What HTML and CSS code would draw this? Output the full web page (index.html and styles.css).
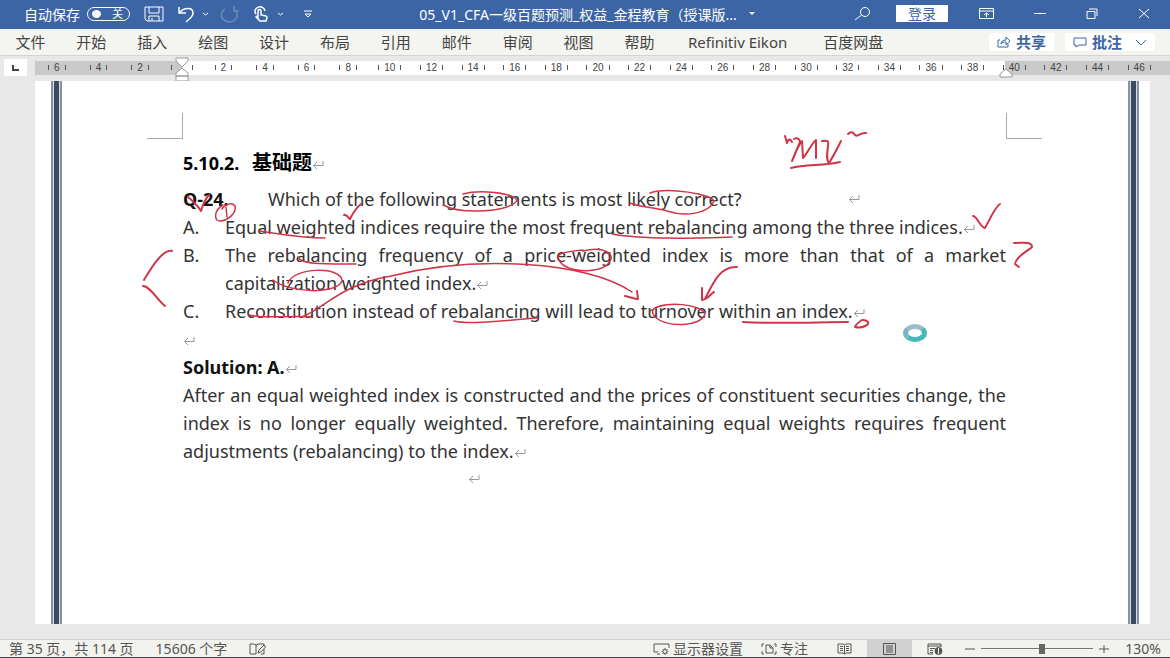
FILE: index.html
```html
<!DOCTYPE html>
<html lang="zh-CN">
<head>
	<meta charset="UTF-8">
	<meta name="viewport" content="width=device-width, initial-scale=1.0">
	<title>05_V1_CFA一级百题预测_权益_金程教育</title>
	<link rel="stylesheet" href="styles.css">
</head>
<body>

	<!-- 段落标记 -->
	<svg class="defs" width="0" height="0" aria-hidden="true">
		<symbol id="ret" viewBox="0 0 12 10">
			<path d="M11 1v4.500H1.500M5 2L1.500 5.500L5 9" />
		</symbol>
	</svg>

	<!-- 标题栏 -->
	<header class="titlebar">
		<div class="quick">
			<label class="autosave">自动保存
				<span class="switch"><input type="checkbox" role="switch"><span>关</span></span>
			</label>
			<button aria-label="保存"><svg width="20" height="16" viewBox="0 0 20 16"><path d="M1 1h18v14H3l-2-2zM5 1v6h10V1M5 15v-5h10v5M8 12v3" /></svg></button>
			<button class="undo" aria-label="撤消"><svg width="28" height="18" viewBox="0 0 28 18"><path class="bold" d="M1 2v6h7M1 8C6 2 15 2 15 8c0 4-3 5-7 9" /><path d="M25 8l2.500 2L30 8" /></svg></button>
			<button class="faded" aria-label="重复"><svg width="20" height="18" viewBox="0 0 20 18"><path class="bold" d="M14 1v5h5M15 5A8 7 0 1 1 5 4" /></svg></button>
			<button aria-label="触摸/鼠标模式"><svg width="32" height="18" viewBox="0 0 32 18"><path class="bold" d="M2 9a5 4.500 0 1 1 9-3M4 12V6c0-2 3-2 3 0v4l5 1c1 0 1 1 1 2l-1 3H6l-4-4c0-1 1-1 2 0z" /><path d="M24 8l2.500 2L29 8" /></svg></button>
			<button aria-label="自定义"><svg width="8" height="8" viewBox="0 0 8 8"><path d="M0 1h8M1 4l3 3l3-3z" /></svg></button>
		</div>
		<div class="doc-title">
			<h1>05_V1_CFA一级百题预测_权益_金程教育（授课版...</h1>
			<svg width="6" height="4" viewBox="0 0 6 4"><path class="solid" d="M0 0h6L3 3z" /></svg>
		</div>
		<div class="window-tools">
			<button aria-label="搜索"><svg width="18" height="14" viewBox="0 0 18 14"><circle cx="11" cy="5" r="4.500" /><path d="M7.500 8L1 13" /></svg></button>
			<button class="login">登录</button>
			<button aria-label="功能区显示选项"><svg width="15" height="11" viewBox="0 0 15 11"><path d="M.5.5h14v10H.5zM1 3h13M7.500 9V5M5 7l2.500-2L10 7" /></svg></button>
			<button aria-label="最小化"><svg width="12" height="11" viewBox="0 0 12 11"><path d="M0 5.500h12" /></svg></button>
			<button aria-label="还原"><svg width="12" height="11" viewBox="0 0 12 11"><path d="M1 3.500h8v7H1zM3 1h8v7" /></svg></button>
			<button aria-label="关闭"><svg width="12" height="11" viewBox="0 0 12 11"><path d="M1 1l10 9M11 1L1 10" /></svg></button>
		</div>
	</header>

	<!-- 选项卡 -->
	<nav class="ribbon">
		<div class="tabs">
			<a href="#">文件</a>
			<a href="#">开始</a>
			<a href="#">插入</a>
			<a href="#">绘图</a>
			<a href="#">设计</a>
			<a href="#">布局</a>
			<a href="#">引用</a>
			<a href="#">邮件</a>
			<a href="#">审阅</a>
			<a href="#">视图</a>
			<a href="#">帮助</a>
		</div>
		<div class="addins">
			<a href="#">Refinitiv Eikon</a>
			<a href="#">百度网盘</a>
		</div>
		<div class="actions">
			<button><svg width="14" height="12" viewBox="0 0 14 12"><path d="M3 4H1v7h10V8M4 8c0-3 2-4 5-4V1l4 4l-4 4V6C7 6 5 6 4 8z" /></svg>共享</button>
			<button><svg width="14" height="11" viewBox="0 0 14 11"><path d="M1 1h12v7H6l-3 2V8H1z" /></svg>批注<svg class="chevron" width="12" height="7" viewBox="0 0 12 7"><path d="M1 1l5 5l5-5" /></svg></button>
		</div>
	</nav>

	<!-- 标尺 -->
	<div class="ruler-row">
		<button class="tab-stop" aria-label="制表符"><svg width="7" height="6" viewBox="0 0 7 6"><path d="M1 0v5h6" /></svg></button>
		<div class="ruler">
			<div class="scale">
				<span>6</span><span>4</span><span>2</span><span></span><span>2</span><span>4</span><span>6</span><span>8</span><span>10</span><span>12</span><span>14</span><span>16</span><span>18</span><span>20</span><span>22</span><span>24</span><span>26</span><span>28</span><span>30</span><span>32</span><span>34</span><span>36</span><span>38</span><span>40</span><span>42</span><span>44</span><span>46</span>
			</div>
			<svg class="marker first" width="14" height="26" viewBox="0 0 14 26"><path d="M1 1h12v3L7 10L1 4zM7 11l6 5v3H1v-3zM1 19h12v5H1z" /></svg>
			<svg class="marker last" width="14" height="10" viewBox="0 0 14 10"><path d="M7 1l6 5v3H1V6z" /></svg>
		</div>
	</div>

	<!-- 文档 -->
	<main class="workspace">
		<article class="page">
			<div class="rail left"></div>
			<div class="text">
				<div class="crops"><i></i><i></i></div>
				<h2>5.10.2. <span class="cjk">基础题</span><svg class="ret"><use href="#ret" /></svg></h2>
				<div class="line question"><b>Q-24.</b><span>Which of the following statements is most likely correct?</span><svg class="ret far"><use href="#ret" /></svg></div>
				<ol>
					<li><span>Equal weighted indices require the most frequent rebalancing among the three indices.<svg class="ret"><use href="#ret" /></svg></span></li>
					<li><span>The rebalancing frequency of a price-weighted index is more than that of a market capitalization weighted index.<svg class="ret"><use href="#ret" /></svg></span></li>
					<li><span>Reconstitution instead of rebalancing will lead to turnover within an index.<svg class="ret"><use href="#ret" /></svg></span></li>
				</ol>
				<p><svg class="ret"><use href="#ret" /></svg></p>
				<p><b>Solution: A.</b><svg class="ret"><use href="#ret" /></svg></p>
				<p>After an equal weighted index is constructed and the prices of constituent securities change, the index is no longer equally weighted. Therefore, maintaining equal weights requires frequent adjustments (rebalancing) to the index.<svg class="ret"><use href="#ret" /></svg></p>
				<p class="tail"><svg class="ret"><use href="#ret" /></svg></p>
			</div>
			<div class="rail right"></div>

			<!-- 手写批注 -->
			<svg class="ink" viewBox="35 81 1115 543" aria-hidden="true">
				<path class="thick" d="M188 197C194 202 198 206 201 211C203 204 206 198 209 195" />
				<path d="M223 205C214 210 213 222 221 221C229 220 237 212 235 206C232 202 225 204 222 209M226 207l1 10" />
				<path class="thick" d="M344 215c3-1 4 3 6 4C353 213 357 207 361 204" />
				<path d="M259 231C275 233 298 238 325 238" />
				<path d="M463 194C480 189 512 193 517 200C512 212 462 215 443 205" />
				<path d="M650 193C669 187 711 194 714 201C709 214 684 217 667 211C654 207 638 207 630 203" />
				<path d="M612 234C646 240 699 238 732 237" />
				<path class="thick" d="M172 251c-10-2-22 19-28 29M143 286c7 0 14 14 22 20" />
				<path d="M298 257C300 265 329 264 356 264" />
				<path d="M583 251C604 246 615 254 610 261C605 272 577 274 563 265C552 254 560 252 583 250" />
				<path d="M273 280C290 293 336 295 342 281C342 266 293 267 288 283" />
				<path d="M249 315C265 319 290 315 312 317M302 317C326 307 340 285 391 276C475 255 587 261 632 292" />
				<path class="thick" d="M625 296c6 1 9 3 13 3l-1-8M737 267C720 266 713 283 705 299M702 288v12c7-1 8-6 12-8" />
				<path d="M454 321C470 325 510 320 537 318" />
				<path d="M650 311C666 299 702 305 705 314C701 327 668 328 655 317C650 311 652 307 665 305" />
				<path class="thick" d="M743 322C780 324 819 322 848 322" />
				<path class="thick" d="M862 320c-3 2-6 4-7 7c8 2 15-3 13-5c-2-2-5-2-5-2" />
				<path class="thick" d="M973 216c4 0 7 11 12 12C990 219 995 207 1000 204" />
				<path class="thick" d="M1014 243C1022 243 1032 241 1032 247C1028 251 1016 256 1015 264L1019 267" />
				<path class="thick" d="M785 136l2 7c2-7 5-1 5-1M794 139c3-2 6 0 6 3L792 161C796 152 798 146 802 141l1 17C807 154 812 143 816 140v18M822 141c6-1 7 0 6 5c-1 8-2 14 1 17C833 157 837 149 841 141" />
				<path class="thick" d="M791 168C806 164 823 166 840 162M848 134c3-3 5-2 7 1c3 3 5-3 11-2" />
			</svg>
			<span class="spinner"></span>
		</article>
	</main>

	<!-- 状态栏 -->
	<footer class="statusbar">
		<span class="pages">第 35 页，共 114 页</span>
		<span>15606 个字</span>
		<button aria-label="校对"><svg width="17" height="12" viewBox="0 0 17 12"><path d="M7 11H1V1h4l2 1v9M7 2l2-1h6v2M9 10l1-3l5-5l1.500 2L12 9zM12 11h3V6" /></svg></button>
		<div class="status-right">
			<button class="display"><svg width="17" height="12" viewBox="0 0 17 12"><path d="M5 9H1V1h15v4M4 11h3" /><circle cx="12" cy="8.500" r="2" /><path d="M12 5v1M12 11v1M8.500 8.500h1M14.500 8.500h1M9.500 6l1 1M13.500 10l1 1M14.500 6l-1 1M10.500 10l-1 1" /></svg>显示器设置</button>
			<button class="focus"><svg width="16" height="12" viewBox="0 0 16 12"><path d="M3 1H1v3M1 8v3h2M13 1h2v3M15 8v3h-2M5 2h4l3 3v5H5zM9 2v3h3" /></svg>专注</button>
			<button class="view" aria-label="阅读视图"><svg width="15" height="12" viewBox="0 0 15 12"><path d="M7.500 2L6 1H1v9h5l1.500 1L9 10h5V1H9L7.500 2v9M3 3.500h3M3 5.500h3M3 7.500h3M9 3.500h3M9 5.500h3M9 7.500h3" /></svg></button>
			<button class="view active" aria-label="页面视图"><svg width="13" height="12" viewBox="0 0 13 12"><path d="M.5.5h12v11H.5zM3 3h7M3 5h7M3 7h7M3 9h7" /></svg></button>
			<button class="view" aria-label="Web 版式视图"><svg width="16" height="12" viewBox="0 0 16 12"><path d="M6 11H1V1h13v3M1 3h13M3 5.500h5M3 7.500h3M3 9.500h3" /><circle class="globe" cx="11.500" cy="8" r="3.500" /><path class="light" d="M11.500 5v6" /></svg></button>
			<button class="step" aria-label="缩小"><svg width="10" height="10" viewBox="0 0 10 10"><path d="M0 5h10" /></svg></button>
			<input type="range" min="0" max="100" value="55" aria-label="缩放">
			<button class="step" aria-label="放大"><svg width="10" height="10" viewBox="0 0 10 10"><path d="M0 5h10M5 1v8" /></svg></button>
			<span class="percent">130%</span>
		</div>
	</footer>

</body>
</html>
```
FILE: styles.css
```css
* {
	box-sizing: border-box;
}
body {
	margin: 0;
	min-height: 100vh;
	display: flex;
	flex-direction: column;
	background-color: #e8e8e8;
	color: #444;
	font-family: "Noto Sans", "Noto Sans CJK SC", sans-serif;
}
button {
	margin: 0;
	padding: 0;
	border: 0;
	background: none;
	color: inherit;
	font: inherit;
	display: flex;
	align-items: center;
	justify-content: center;
}
a {
	color: inherit;
	text-decoration: none;
}
svg {
	fill: none;
	stroke: currentColor;
	flex: none;
}
.defs {
	position: absolute;
}

/* Titlebar */
.titlebar {
	height: 29px;
	padding: 0 20px 2px 24px;
	background-color: #3c65a5;
	color: #fff;
	font-size: 14px;
	display: flex;
	align-items: center;
	justify-content: space-between;
}
.titlebar svg {
	overflow: visible;
}
.quick, .autosave, .doc-title, .window-tools {
	display: flex;
	align-items: center;
}
.quick {
	flex: 1;
	gap: 14px;
}
.quick button:last-child {
	margin-left: 4px;
}
.autosave {
	gap: 7px;
}
.switch {
	width: 43px;
	height: 14px;
	padding: 0 6px 0 4px;
	border: 1px solid #fff;
	border-radius: 7px;
	font-size: 11px;
	line-height: 12px;
	display: flex;
	align-items: center;
	justify-content: space-between;
}
.switch input {
	appearance: none;
	width: 9px;
	height: 8px;
	margin: 0;
	border-radius: 50%;
	background-color: #fff;
}
.bold {
	stroke-width: 1.5;
}
.solid {
	fill: currentColor;
	stroke: none;
}
.faded {
	opacity: 0.25;
}
.doc-title {
	gap: 12px;
}
.doc-title h1 {
	margin: 0;
	font-size: 14px;
	font-weight: normal;
}
.window-tools {
	flex: 1;
	justify-content: flex-end;
	gap: 40px;
}
.login {
	width: 52px;
	height: 17px;
	margin: 0 -9px 0 -16px;
	background-color: #fff;
	color: #3c65a5;
	font-size: 14px;
	line-height: 17px;
}

/* Ribbon */
.ribbon {
	height: 27px;
	padding-right: 15px;
	background-color: #f4f4f0;
	border-bottom: 1px solid #d4d4d4;
	font-size: 15px;
	line-height: 26px;
	display: flex;
	align-items: center;
}
.tabs {
	flex: 0 0 58%;
	display: grid;
	grid-template-columns: repeat(11, 1fr);
	text-align: center;
}
.addins {
	flex: 1;
	padding-left: 18px;
	display: flex;
	gap: 36px;
}
.actions {
	display: flex;
	gap: 11px;
}
.actions button {
	height: 18px;
	padding: 0 8px;
	gap: 5px;
	background-color: #fff;
	color: #3c65a5;
	font-weight: bold;
	line-height: 18px;
}
.chevron {
	margin-left: 8px;
}

/* Ruler */
.ruler-row {
	height: 25px;
	padding-bottom: 2px;
	display: flex;
	align-items: center;
}
.tab-stop {
	width: 23px;
	height: 17px;
	margin: 0 8px 0 4px;
	background-color: #fff;
}
.tab-stop svg {
	stroke-width: 2;
}
.ruler {
	position: relative;
	flex: 1;
	height: 14px;
	background-color: #c9c9c9;
	padding: 0 10px 0 1px;
	font: 10px/14px "Liberation Sans", sans-serif;
}
.ruler::before {
	content: "";
	position: absolute;
	left: 147px;
	right: 165px;
	height: 14px;
	background-color: #fff;
}
.scale {
	position: relative;
	display: grid;
	grid-template-columns: repeat(27, 1fr);
}
.scale span {
	display: flex;
	align-items: center;
	justify-content: center;
	gap: 5px;
	height: 14px;
}
.scale span::before, .scale span::after {
	content: "";
	width: 1px;
	height: 5px;
	background-color: #555;
}
.scale span:empty {
	gap: 20px;
}
.marker {
	position: absolute;
	fill: #fff;
	stroke: #999;
}
.first {
	left: 140px;
	top: -4px;
}
.last {
	right: 157px;
	top: 7px;
}

/* Document */
.workspace {
	flex: 1;
	padding: 0 20px 15px 35px;
	display: flex;
}
.page {
	position: relative;
	flex: 1;
	background-color: #fff;
	display: flex;
}
.rail {
	width: 11px;
	border: solid #8793a0;
	border-width: 0 2px;
	background: linear-gradient(90deg, #d5dae0 1px, #3c4c60 1px, #3c4c60 6px, #d5dae0 6px);
}
.left {
	margin-left: 16px;
}
.right {
	margin-right: 11px;
}
.text {
	flex: 1;
	padding: 32px 122px 0 121px;
	color: #333;
	font: 18px/28px "Noto Sans", "Noto Sans CJK SC", sans-serif;
}
.text b {
	color: #111;
}
.crops {
	height: 26px;
	margin: 0 -36px;
	display: flex;
	justify-content: space-between;
}
.crops i {
	width: 36px;
	border: solid #aaa;
	border-width: 0 1px 1px 0;
}
.crops i:last-child {
	border-width: 0 0 1px 1px;
}
.text h2 {
	margin: 10px 0 8px;
	color: #000;
	font-size: 18px;
	line-height: 28px;
}
.cjk {
	margin-left: 8px;
	font-size: 20px;
	line-height: 20px;
}
.line {
	display: flex;
	align-items: center;
}
.question b {
	width: 85px;
}
.far {
	margin-left: 106px;
}
.ret {
	width: 12px;
	height: 10px;
	color: #999;
}
.text ol, .text p {
	margin: 0;
	padding: 0;
	text-align: justify;
}
.text ol {
	list-style: none;
	counter-reset: answer;
}
.text li {
	counter-increment: answer;
	display: grid;
	grid-template-columns: 42px 1fr;
}
.text li::before {
	content: counter(answer, upper-alpha) ".";
}
.text .tail {
	padding-left: 285px;
	line-height: 24px;
}
.ink {
	position: absolute;
	left: 0;
	top: 0;
	width: 100%;
	color: #cf3546;
	stroke-width: 1.5;
	stroke-linecap: round;
	stroke-linejoin: round;
}
.thick {
	stroke-width: 2;
}
.spinner {
	position: absolute;
	left: 868px;
	top: 243px;
	width: 24px;
	height: 18px;
	border: 5px solid #45b8b8;
	border-top-color: #9bbccb;
	border-left-color: #7bb4c2;
	border-radius: 50%;
}

/* Statusbar */
.statusbar {
	height: 19px;
	padding: 0 9px;
	background-color: #f2f3ee;
	border-top: 1px solid #d0d0d0;
	border-bottom: 1px solid #444;
	font-size: 14px;
	line-height: 17px;
	color: #555;
	display: flex;
	align-items: center;
	gap: 22px;
}
.status-right {
	margin-left: auto;
	display: flex;
	align-items: center;
}
.status-right button {
	height: 17px;
	gap: 3px;
}
.focus {
	margin: 0 14px 0 18px;
}
.status-right .view {
	width: 45px;
}
.status-right .active {
	background-color: #d0d0d0;
}
.step {
	width: 10px;
}
.view + .step {
	margin-left: 8px;
}
.globe {
	fill: currentColor;
}
.light {
	stroke: #f2f3ee;
}
.statusbar input {
	appearance: none;
	width: 112px;
	height: 11px;
	margin: 0 6px;
	background: linear-gradient(#777, #777) center / 100% 1px no-repeat;
}
.statusbar input::-webkit-slider-thumb {
	appearance: none;
	width: 6px;
	height: 10px;
	background-color: #666;
}
.percent {
	width: 52px;
	text-align: right;
}
```
